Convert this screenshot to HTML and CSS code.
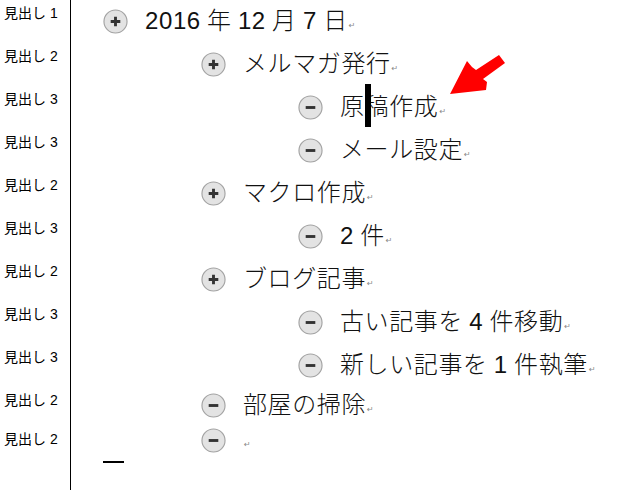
FILE: index.html
```html
<!DOCTYPE html>
<html lang="ja">
<head>
    <meta charset="UTF-8">
    <title>アウトライン</title>
    <link rel="stylesheet" href="styles.css">
</head>
<body>
    <div class="page">
        <div class="gutter">
            <div class="label">見出し 1</div>
            <div class="label">見出し 2</div>
            <div class="label">見出し 3</div>
            <div class="label">見出し 3</div>
            <div class="label">見出し 2</div>
            <div class="label">見出し 3</div>
            <div class="label">見出し 2</div>
            <div class="label">見出し 3</div>
            <div class="label">見出し 3</div>
            <div class="label label-short">見出し 2</div>
            <div class="label label-last">見出し 2</div>
        </div>
        <div class="outline">
            <div class="row lv1">
                <svg class="toggle" viewBox="0 0 26 26"><circle cx="13" cy="13" r="12"/><path d="M8 13h10M13 8v10"/></svg>
                <span class="text">2016 年 12 月 7 日</span><span class="para">↵</span>
            </div>
            <div class="row lv2">
                <svg class="toggle" viewBox="0 0 26 26"><circle cx="13" cy="13" r="12"/><path d="M8 13h10M13 8v10"/></svg>
                <span class="text">メルマガ発行</span><span class="para">↵</span>
            </div>
            <div class="row lv3">
                <svg class="toggle" viewBox="0 0 26 26"><circle cx="13" cy="13" r="12"/><path d="M8 13h10"/></svg>
                <span class="text">原<span class="caret"></span>稿作成</span><span class="para">↵</span>
            </div>
            <div class="row lv3">
                <svg class="toggle" viewBox="0 0 26 26"><circle cx="13" cy="13" r="12"/><path d="M8 13h10"/></svg>
                <span class="text">メール設定</span><span class="para">↵</span>
            </div>
            <div class="row lv2">
                <svg class="toggle" viewBox="0 0 26 26"><circle cx="13" cy="13" r="12"/><path d="M8 13h10M13 8v10"/></svg>
                <span class="text">マクロ作成</span><span class="para">↵</span>
            </div>
            <div class="row lv3">
                <svg class="toggle" viewBox="0 0 26 26"><circle cx="13" cy="13" r="12"/><path d="M8 13h10"/></svg>
                <span class="text">2 件</span><span class="para">↵</span>
            </div>
            <div class="row lv2">
                <svg class="toggle" viewBox="0 0 26 26"><circle cx="13" cy="13" r="12"/><path d="M8 13h10M13 8v10"/></svg>
                <span class="text">ブログ記事</span><span class="para">↵</span>
            </div>
            <div class="row lv3">
                <svg class="toggle" viewBox="0 0 26 26"><circle cx="13" cy="13" r="12"/><path d="M8 13h10"/></svg>
                <span class="text">古い記事を 4 件移動</span><span class="para">↵</span>
            </div>
            <div class="row lv3">
                <svg class="toggle" viewBox="0 0 26 26"><circle cx="13" cy="13" r="12"/><path d="M8 13h10"/></svg>
                <span class="text">新しい記事を 1 件執筆</span><span class="para">↵</span>
            </div>
            <div class="row lv2 row-short">
                <svg class="toggle" viewBox="0 0 26 26"><circle cx="13" cy="13" r="12"/><path d="M8 13h10"/></svg>
                <span class="text">部屋の掃除</span><span class="para">↵</span>
            </div>
            <div class="row lv2 row-last">
                <svg class="toggle" viewBox="0 0 26 26"><circle cx="13" cy="13" r="12"/><path d="M8 13h10"/></svg>
                <span class="text"></span><span class="para">↵</span>
            </div>
            <div class="end-mark"></div>
        </div>
    </div>

    <!-- 赤い矢印 -->
    <svg class="arrow" width="618" height="490" viewBox="0 0 618 490">
        <polygon points="450,94 467,61 472,67 476,70 499,55 505,63 483,79 487,82 486,90"/>
    </svg>
</body>
</html>
```

FILE: styles.css
```css
body {
    margin: 0;
    padding: 0;
    background-color: #ffffff;
    font-family: "Liberation Sans", "Noto Sans CJK JP", sans-serif;
    color: #111;
    overflow: hidden;
}
.page {
    display: flex;
    height: 100vh;
}
.gutter {
    width: 70px;
    border-right: 1px solid #000;
    flex-shrink: 0;
}
.label {
    height: 43px;
    box-sizing: border-box;
    padding: 5px 0 0 4px;
    font-size: 14px;
    line-height: 16px;
    color: #000;
}
.label-short {
    height: 39px;
}
.outline {
    flex: 1;
}
.row {
    display: flex;
    align-items: center;
    height: 43px;
    box-sizing: border-box;
    padding-bottom: 1px;
}
.row-short {
    height: 39px;
    padding-bottom: 3px;
}
.row-last {
    height: 30px;
    padding-bottom: 2px;
}
.lv1 { padding-left: 32px; }
.lv2 { padding-left: 130px; }
.lv3 { padding-left: 227px; }

.toggle {
    width: 25px;
    height: 25px;
    flex-shrink: 0;
    margin-right: 17px;
}
.toggle circle {
    fill: #e3e3e3;
    stroke: #a3a3a3;
    stroke-width: 1.2;
}
.toggle path {
    stroke: #333;
    stroke-width: 3;
    fill: none;
}
.text {
    position: relative;
    font-size: 24px;
    letter-spacing: 0.6px;
    word-spacing: -1px;
    line-height: 30px;
    white-space: pre;
    font-weight: 300;
}
.caret {
    position: absolute;
    width: 6px;
    height: 43px;
    margin-top: -8px;
    background-color: #000;
}
.para {
    font-family: "DejaVu Sans", sans-serif;
    font-size: 8px;
    color: #888;
    margin-top: 9px;
    margin-left: 1px;
}
.end-mark {
    width: 21px;
    height: 2px;
    margin: 5px 0 0 32px;
    background-color: #000;
}
.arrow {
    position: absolute;
    left: 0;
    top: 0;
    pointer-events: none;
}
.arrow polygon {
    fill: #ff0000;
}
```
